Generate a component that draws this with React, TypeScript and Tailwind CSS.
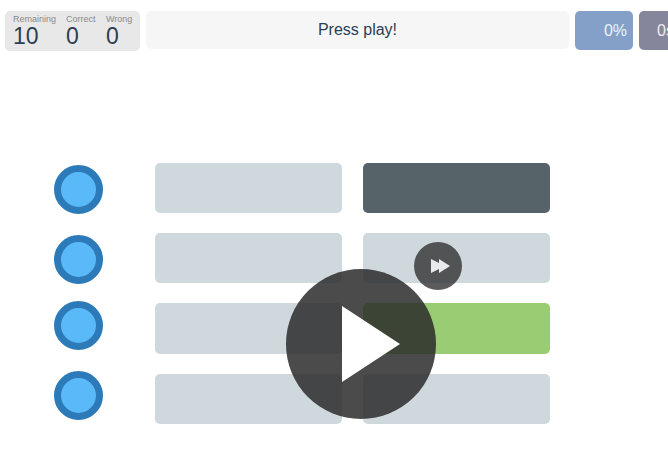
import React from "react";

const Stat = ({ label, value, className }: { label: string; value: number; className: string }) => (
  <div className={className}>
    <div className="text-[9px] leading-[11px] text-[#8a8a8a]">{label}</div>
    <div className="text-[23px] leading-[23px] text-[#2c3e50]">{value}</div>
  </div>
);

const Dot = () => (
  <div className="w-[49px] h-[49px] rounded-full bg-[#5ab9f8] border-[7px] border-[#2c7ab8]" />
);

const Box = ({ className = "bg-[#cfd8dd]" }: { className?: string }) => (
  <div className={`h-[50.2px] rounded-[5px] ${className}`} />
);

export default function App() {
  return (
    <div className="relative w-[668px] h-[462px] overflow-hidden bg-white font-['Liberation_Sans',Arial,sans-serif]">
      {/* Top bar */}
      <div className="flex items-start gap-[6px] pt-[11px] pl-[5px] w-[800px]">
        <div className="flex w-[135px] h-[40px] rounded-[5px] bg-[#e8e8e8] pt-[3px]">
          <Stat label="Remaining" value={10} className="ml-[8px] w-[53px]" />
          <Stat label="Correct" value={0} className="w-[40px]" />
          <Stat label="Wrong" value={0} className="" />
        </div>
        <div className="flex items-center justify-center w-[423px] h-[38px] rounded-[5px] bg-[#f6f6f6] text-[16px] text-[#2c3e50]">
          Press play!
        </div>
        <div className="flex items-center justify-end pr-[6px] w-[58px] h-[39px] rounded-[5px] bg-[#84a0c8] text-[16px] text-[#eef2f8]">
          0%
        </div>
        <div className="flex items-center pl-[18px] w-[58px] h-[39px] rounded-[5px] bg-[#85859b] text-[16px] text-[#eeeef2]">
          0s
        </div>
      </div>

      {/* Board */}
      <div className="flex mt-[112px] pl-[54px]">
        <div className="flex flex-col gap-[17px] pt-[2px] w-[101px]">
          <div className="flex flex-col gap-[21px]">
            <Dot />
            <Dot />
          </div>
          <div className="flex flex-col gap-[21px]">
            <Dot />
            <Dot />
          </div>
        </div>
        <div className="grid grid-cols-[187px_187px] gap-x-[21px] gap-y-[20px]">
          <Box />
          <Box className="bg-[#566469]" />
          <Box />
          <Box />
          <Box />
          <Box className="bg-[#99cc73]" />
          <Box />
          <Box />
        </div>
      </div>

      {/* Skip button */}
      <div className="absolute left-[414px] top-[242px] flex items-center justify-center w-[48px] h-[48px] rounded-full bg-[#323232]/80">
        <svg width="48" height="48" viewBox="0 0 48 48" className="fill-[#e8eaec]">
          <polygon points="17,17 31,24 17,31" />
          <polygon points="25,17 36,24 25,31" />
        </svg>
      </div>

      {/* Play button */}
      <div className="absolute left-[286px] top-[269px] flex items-center justify-center w-[150px] h-[150px] rounded-full bg-[#2b2b2b]/85">
        <svg width="150" height="150" viewBox="0 0 150 150" className="fill-white">
          <polygon points="56,37 114,75 56,113" />
        </svg>
      </div>
    </div>
  );
}
